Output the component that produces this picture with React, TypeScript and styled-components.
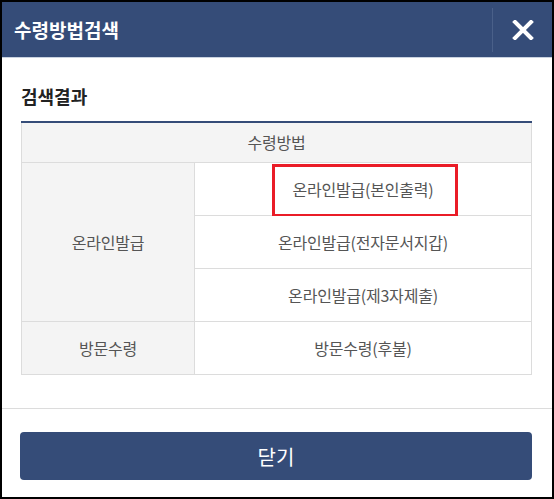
import React from "react";
import styled, { createGlobalStyle } from "styled-components";

const Global = createGlobalStyle`
  html, body { margin: 0; padding: 0; background: #000; }
  * { box-sizing: border-box; }
  body { font-family: "Noto Sans CJK KR", "Noto Sans", sans-serif; }
`;

const Frame = styled.div`
  width: 554px;
  height: 499px;
  border: 2px solid #000;
  background: #fff;
  display: flex;
  flex-direction: column;
`;

const Header = styled.header`
  height: 56px;
  background: #354c78;
  display: flex;
  align-items: stretch;
  border-bottom: 1px solid #c9d2e0;
  flex-shrink: 0;
`;

const Title = styled.h1`
  flex: 1;
  margin: 0;
  padding-left: 12px;
  display: flex;
  align-items: center;
  color: #fff;
  font-size: 19px;
  font-weight: 700;
  letter-spacing: 0;
`;

const CloseButton = styled.button`
  width: 60px;
  margin: 6px 0 5px;
  border: 0;
  border-left: 1px solid #4a6089;
  background: transparent;
  display: flex;
  align-items: center;
  justify-content: center;
  padding: 0;
  cursor: pointer;
`;

const Body = styled.main`
  flex: 1;
  padding: 26px 21px 0 19px;
`;

const Heading = styled.h2`
  margin: 0 0 13px;
  font-size: 18px;
  line-height: 24px;
  font-weight: 700;
  color: #222;
  letter-spacing: 0;
`;

const Table = styled.table`
  width: 511px;
  border-collapse: collapse;
  border-top: 2px solid #354c78;
  table-layout: fixed;
  font-size: 16px;
  letter-spacing: -0.2px;
  color: #555;
`;

const HeadCell = styled.th`
  height: 40px;
  background: #f4f4f4;
  border: 1px solid #dcdcdc;
  border-top: 0;
  font-weight: 400;
  text-align: center;
  vertical-align: middle;
  padding: 0;
`;

const Cell = styled.td<{ $label?: boolean }>`
  height: 53px;
  border: 1px solid #dcdcdc;
  background: ${(p) => (p.$label ? "#f4f4f4" : "#fff")};
  text-align: center;
  vertical-align: middle;
  padding: 0;
  position: relative;
`;

const Highlight = styled.span`
  position: absolute;
  left: 77px;
  top: 1px;
  width: 186px;
  height: 53px;
  border: 3px solid #ea1c27;
  pointer-events: none;
`;

const Footer = styled.footer`
  border-top: 1px solid #dcdcdc;
  padding: 23px 20px 17px 18px;
  flex-shrink: 0;
`;

const PrimaryButton = styled.button`
  width: 100%;
  height: 48px;
  border: 0;
  border-radius: 4px;
  background: #354c78;
  color: #fff;
  font-family: "Noto Sans CJK KR", "Noto Sans", sans-serif;
  font-size: 20px;
  font-weight: 400;
  cursor: pointer;
`;

const CloseIcon = () => (
  <svg width="22" height="20" viewBox="0 0 22 20" aria-hidden="true">
    <path d="M3 2 L19 18 M19 2 L3 18" stroke="#fff" strokeWidth="4" strokeLinecap="square" />
  </svg>
);

const rows = ["온라인발급(본인출력)", "온라인발급(전자문서지갑)", "온라인발급(제3자제출)"];

export default function App() {
  return (
    <>
      <Global />
      <Frame>
        <Header>
          <Title>수령방법검색</Title>
          <CloseButton aria-label="닫기">
            <CloseIcon />
          </CloseButton>
        </Header>
        <Body>
          <Heading>검색결과</Heading>
          <Table>
            <colgroup>
              <col style={{ width: 173 }} />
              <col />
            </colgroup>
            <thead>
              <tr>
                <HeadCell colSpan={2}>수령방법</HeadCell>
              </tr>
            </thead>
            <tbody>
              {rows.map((r, i) => (
                <tr key={r}>
                  {i === 0 && (
                    <Cell $label rowSpan={3}>
                      온라인발급
                    </Cell>
                  )}
                  <Cell>
                    {r}
                    {i === 0 && <Highlight />}
                  </Cell>
                </tr>
              ))}
              <tr>
                <Cell $label>방문수령</Cell>
                <Cell>방문수령(후불)</Cell>
              </tr>
            </tbody>
          </Table>
        </Body>
        <Footer>
          <PrimaryButton>닫기</PrimaryButton>
        </Footer>
      </Frame>
    </>
  );
}
